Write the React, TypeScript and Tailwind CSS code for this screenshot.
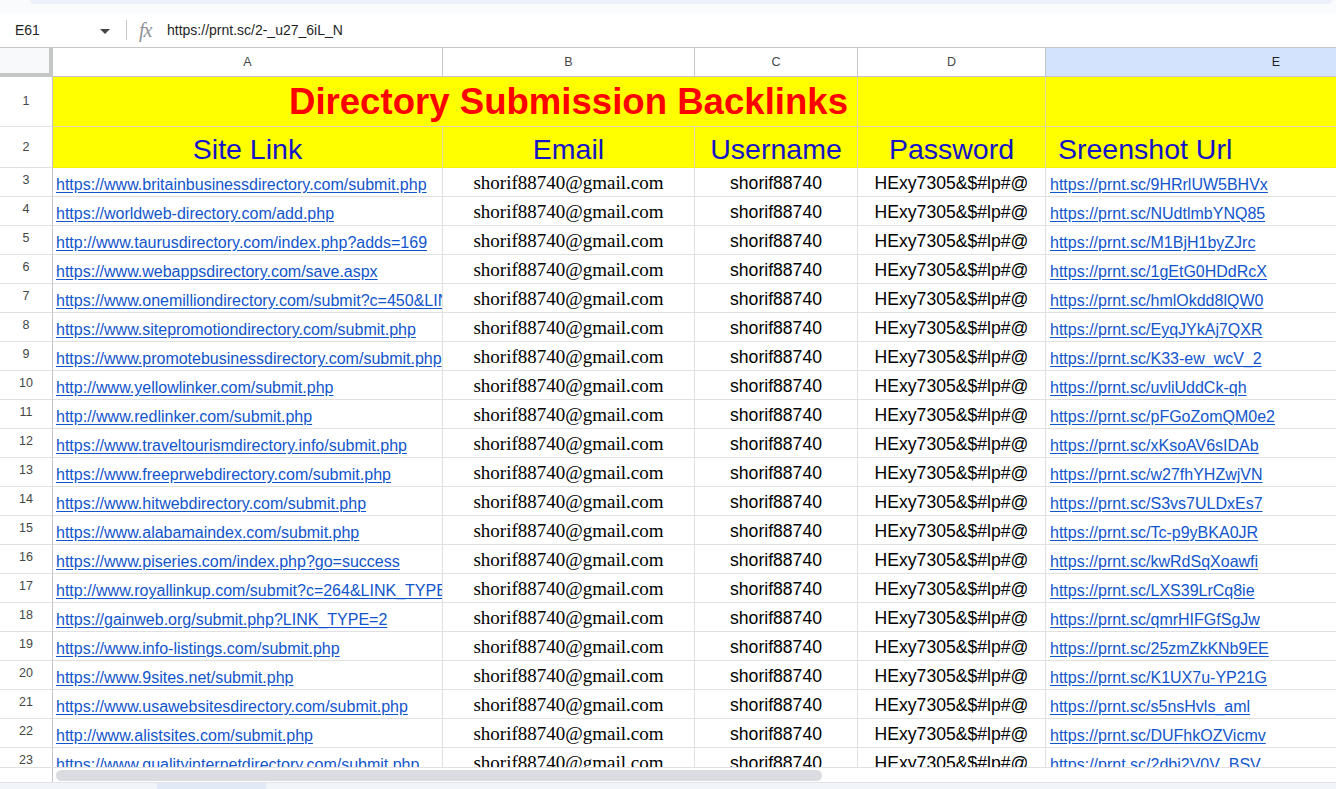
import React from 'react';

const rows: { site: string; shot: string }[] = [
    { site: 'https://www.britainbusinessdirectory.com/submit.php', shot: 'https://prnt.sc/9HRrlUW5BHVx' },
    { site: 'https://worldweb-directory.com/add.php', shot: 'https://prnt.sc/NUdtlmbYNQ85' },
    { site: 'http://www.taurusdirectory.com/index.php?adds=169', shot: 'https://prnt.sc/M1BjH1byZJrc' },
    { site: 'https://www.webappsdirectory.com/save.aspx', shot: 'https://prnt.sc/1gEtG0HDdRcX' },
    { site: 'https://www.onemilliondirectory.com/submit?c=450&LINK_TYPE=2', shot: 'https://prnt.sc/hmlOkdd8lQW0' },
    { site: 'https://www.sitepromotiondirectory.com/submit.php', shot: 'https://prnt.sc/EyqJYkAj7QXR' },
    { site: 'https://www.promotebusinessdirectory.com/submit.php', shot: 'https://prnt.sc/K33-ew_wcV_2' },
    { site: 'http://www.yellowlinker.com/submit.php', shot: 'https://prnt.sc/uvliUddCk-qh' },
    { site: 'http://www.redlinker.com/submit.php', shot: 'https://prnt.sc/pFGoZomQM0e2' },
    { site: 'https://www.traveltourismdirectory.info/submit.php', shot: 'https://prnt.sc/xKsoAV6sIDAb' },
    { site: 'https://www.freeprwebdirectory.com/submit.php', shot: 'https://prnt.sc/w27fhYHZwjVN' },
    { site: 'https://www.hitwebdirectory.com/submit.php', shot: 'https://prnt.sc/S3vs7ULDxEs7' },
    { site: 'https://www.alabamaindex.com/submit.php', shot: 'https://prnt.sc/Tc-p9yBKA0JR' },
    { site: 'https://www.piseries.com/index.php?go=success', shot: 'https://prnt.sc/kwRdSqXoawfi' },
    { site: 'http://www.royallinkup.com/submit?c=264&LINK_TYPE=2', shot: 'https://prnt.sc/LXS39LrCq8ie' },
    { site: 'https://gainweb.org/submit.php?LINK_TYPE=2', shot: 'https://prnt.sc/qmrHIFGfSgJw' },
    { site: 'https://www.info-listings.com/submit.php', shot: 'https://prnt.sc/25zmZkKNb9EE' },
    { site: 'https://www.9sites.net/submit.php', shot: 'https://prnt.sc/K1UX7u-YP21G' },
    { site: 'https://www.usawebsitesdirectory.com/submit.php', shot: 'https://prnt.sc/s5nsHvls_aml' },
    { site: 'http://www.alistsites.com/submit.php', shot: 'https://prnt.sc/DUFhkOZVicmv' },
    { site: 'https://www.qualityinternetdirectory.com/submit.php', shot: 'https://prnt.sc/2dbj2V0V_BSV' },
];

const DataRow: React.FC<{ n: number; site: string; shot: string }> = ({ n, site, shot }) => (
    <div className="flex h-[29px] shrink-0">
        <div className="w-[53px] shrink-0 border-r border-b border-r-[#c4c7c5] border-b-[#e1e1e1] flex items-center justify-center pb-[4px] text-[12.5px] text-[#444746]">
            {n}
        </div>
        <div className="w-[390px] shrink-0 border-r border-b border-[#e1e1e1] overflow-hidden whitespace-nowrap flex items-end pl-[3px] pb-[2px]">
            <a className="text-[16px] leading-[19px] text-[#1155cc] underline underline-offset-[2px]">{site}</a>
        </div>
        <div className="w-[252px] shrink-0 border-r border-b border-[#e1e1e1] overflow-hidden whitespace-nowrap flex items-end justify-center pb-[2px] font-['Liberation_Serif',serif] text-[19px] leading-[22px] text-black">
            shorif88740@gmail.com
        </div>
        <div className="w-[163px] shrink-0 border-r border-b border-[#e1e1e1] overflow-hidden whitespace-nowrap flex items-end justify-center pb-[3px] text-[17.6px] leading-[20px] text-black">
            shorif88740
        </div>
        <div className="w-[188px] shrink-0 border-r border-b border-[#e1e1e1] overflow-hidden whitespace-nowrap flex items-end justify-center pb-[3px] text-[17.6px] leading-[20px] text-black">
            HExy7305&amp;$#lp#@
        </div>
        <div className="w-[460px] shrink-0 border-r border-b border-[#e1e1e1] overflow-hidden whitespace-nowrap flex items-end pl-[4px] pb-[2px]">
            <a className="text-[16px] leading-[19px] text-[#1155cc] underline underline-offset-[2px]">{shot}</a>
        </div>
    </div>
);

const App: React.FC = () => {
    return (
        <div className="w-[1336px] h-[789px] overflow-hidden bg-white flex flex-col font-['Liberation_Sans',Arial,sans-serif]">
            {/* toolbar edge */}
            <div className="h-[13px] shrink-0 bg-[#f9fbfd]">
                <div className="ml-[30px] mr-[4px] h-[4px] bg-[#edf2fa] rounded-b-[8px]" />
            </div>

            {/* formula bar */}
            <div className="h-[35px] shrink-0 flex items-center border-b border-[#c4c7c5] bg-white">
                <div className="w-[126px] shrink-0 flex items-center pl-[15px] pr-[16px] justify-between">
                    <span className="text-[14px] text-[#1f1f1f]">E61</span>
                    <span className="w-0 h-0 border-l-[5px] border-r-[5px] border-t-[5px] border-l-transparent border-r-transparent border-t-[#444746] mt-[2px]" />
                </div>
                <div className="w-px h-[20px] bg-[#c4c7c5]" />
                <span className="ml-[12px] w-[28px] font-['Liberation_Serif',serif] italic text-[20px] leading-[20px] tracking-[-1px] text-[#8e9195]">fx</span>
                <span className="text-[14px] text-[#1f1f1f]">https://prnt.sc/2-_u27_6iL_N</span>
            </div>

            {/* column headers */}
            <div className="h-[29px] shrink-0 flex text-[12.5px] text-[#444746]">
                <div className="w-[53px] shrink-0 bg-[#f8f9fa] border-r-4 border-b-4 border-[#c4c7c5]" />
                <div className="w-[390px] shrink-0 border-r border-b border-[#c4c7c5] flex items-center justify-center">A</div>
                <div className="w-[252px] shrink-0 border-r border-b border-[#c4c7c5] flex items-center justify-center">B</div>
                <div className="w-[163px] shrink-0 border-r border-b border-[#c4c7c5] flex items-center justify-center">C</div>
                <div className="w-[188px] shrink-0 border-r border-b border-[#c4c7c5] flex items-center justify-center">D</div>
                <div className="w-[460px] shrink-0 bg-[#d3e3fd] border-b border-[#c4c7c5] flex items-center justify-center text-[#1f1f1f]">E</div>
            </div>

            {/* grid body */}
            <div className="flex-1 min-h-0 overflow-hidden flex flex-col">
                <div className="flex h-[50px] shrink-0">
                    <div className="w-[53px] shrink-0 border-r border-b border-r-[#c4c7c5] border-b-[#e1e1e1] flex items-center justify-center text-[12.5px] text-[#444746]">1</div>
                    <div className="w-[805px] shrink-0 bg-[#ffff00] border-r border-b border-[#dcdca8] flex items-center justify-end pr-[9px] overflow-hidden whitespace-nowrap">
                        <span className="text-[36.6px] font-bold text-[#ff0000] leading-[42px]">Directory Submission Backlinks</span>
                    </div>
                    <div className="w-[188px] shrink-0 bg-[#ffff00] border-r border-b border-[#dcdca8]" />
                    <div className="w-[460px] shrink-0 bg-[#ffff00] border-b border-[#dcdca8]" />
                </div>
                <div className="flex h-[41px] shrink-0 text-[28.5px] leading-[33px] text-[#1414c8]">
                    <div className="w-[53px] shrink-0 border-r border-b border-r-[#c4c7c5] border-b-[#e1e1e1] flex items-center justify-center text-[12.5px] leading-[16px] text-[#444746]">2</div>
                    <div className="w-[390px] shrink-0 bg-[#ffff00] border-r border-b border-r-[#dcdca8] border-b-[#f5f500] flex items-end justify-center pb-[1px]">Site Link</div>
                    <div className="w-[252px] shrink-0 bg-[#ffff00] border-r border-b border-r-[#dcdca8] border-b-[#f5f500] flex items-end justify-center pb-[1px]">Email</div>
                    <div className="w-[163px] shrink-0 bg-[#ffff00] border-r border-b border-r-[#dcdca8] border-b-[#f5f500] flex items-end justify-center pb-[1px]">Username</div>
                    <div className="w-[188px] shrink-0 bg-[#ffff00] border-r border-b border-r-[#dcdca8] border-b-[#f5f500] flex items-end justify-center pb-[1px]">Password</div>
                    <div className="w-[460px] shrink-0 bg-[#ffff00] border-b border-b-[#f5f500] flex items-end pl-[12px] pb-[1px] whitespace-nowrap">Sreenshot Url</div>
                </div>
                {rows.map((r, i) => (
                    <DataRow key={i} n={i + 3} site={r.site} shot={r.shot} />
                ))}
            </div>

            {/* horizontal scrollbar */}
            <div className="h-[15px] shrink-0 flex border-t border-[#e1e1e1] bg-white">
                <div className="w-[53px] shrink-0 border-r border-[#c4c7c5]" />
                <div className="flex-1 flex items-center pl-[3px]">
                    <div className="w-[766px] h-[11px] rounded-full bg-[#dadce0]" />
                </div>
            </div>

            {/* sheet tabs edge */}
            <div className="h-[7px] shrink-0 bg-[#f1f4f9] border-t border-[#e1e3e6] flex">
                <div className="ml-[157px] w-[109px] bg-[#e1e9f7]" />
            </div>
        </div>
    );
};

export default App;
